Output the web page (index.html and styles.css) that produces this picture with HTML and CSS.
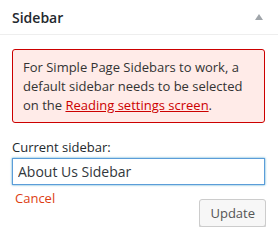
FILE: index.html
```html
<!DOCTYPE html>
<html lang="en">
<head>
    <meta charset="UTF-8">
    <title>Sidebar</title>
    <link rel="stylesheet" href="styles.css">
</head>
<body>
<div class="postbox">
    <div class="hndle">
        <h2>Sidebar</h2>
        <svg class="toggle" width="8" height="6" viewBox="0 0 8 6"><path d="M4 0 L8 6 L0 6 Z" fill="#a0a5aa"/></svg>
    </div>

    <div class="inside">
        <div class="notice">
            For Simple Page Sidebars to work, a default sidebar needs to be selected on the <a href="#">Reading settings screen</a>.
        </div>

        <label for="sidebarName">Current sidebar:</label>
        <input type="text" id="sidebarName" value="About Us Sidebar">

        <div class="actions">
            <a href="#" class="cancel">Cancel</a>
            <button class="update">Update</button>
        </div>
    </div>
</div>
</body>
</html>
```

FILE: styles.css
```css
body {
    margin: 0;
    background: #fff;
    font-family: "Open Sans", sans-serif;
    font-size: 13px;
    color: #32373c;
}

.hndle {
    display: flex;
    align-items: center;
    justify-content: space-between;
    height: 34px;
    padding: 0 15px 0 12px;
    border-bottom: 1px solid #eee;
}

.hndle h2 {
    margin: 0;
    font-size: 14px;
    font-weight: 600;
    color: #23282d;
}

.toggle {
    margin-top: -1px;
}

.inside {
    padding: 14px 13px 0 12px;
}

.notice {
    background: #ffebe8;
    border: 1px solid #cc0000;
    border-radius: 3px;
    padding: 8px 10px 7px;
    line-height: 19px;
    color: #333;
}

.notice a {
    color: #cc0000;
}

label {
    display: block;
    margin-top: 15px;
    line-height: 19px;
    color: #23282d;
}

input {
    display: block;
    width: 100%;
    box-sizing: border-box;
    height: 27px;
    margin-top: 1px;
    padding: 0 5px;
    border: 1px solid #5b9dd9;
    box-shadow: 0 0 2px rgba(30, 140, 190, 0.8);
    font-family: "Open Sans", sans-serif;
    font-size: 14px;
    color: #32373c;
    outline: none;
}

.actions {
    display: flex;
    justify-content: space-between;
    align-items: flex-start;
    margin-top: 4px;
}

.cancel {
    margin-left: 3px;
    line-height: 19px;
    color: #dd3d13;
    text-decoration: none;
}

.update {
    margin-top: 10px;
    margin-right: -1px;
    height: 28px;
    padding: 0 10px 1px;
    border: 1px solid #ccc;
    border-radius: 3px;
    background: #f7f7f7;
    box-shadow: 0 1px 0 #ccc;
    font-family: "Open Sans", sans-serif;
    font-size: 13px;
    color: #555;
    cursor: pointer;
}
```
